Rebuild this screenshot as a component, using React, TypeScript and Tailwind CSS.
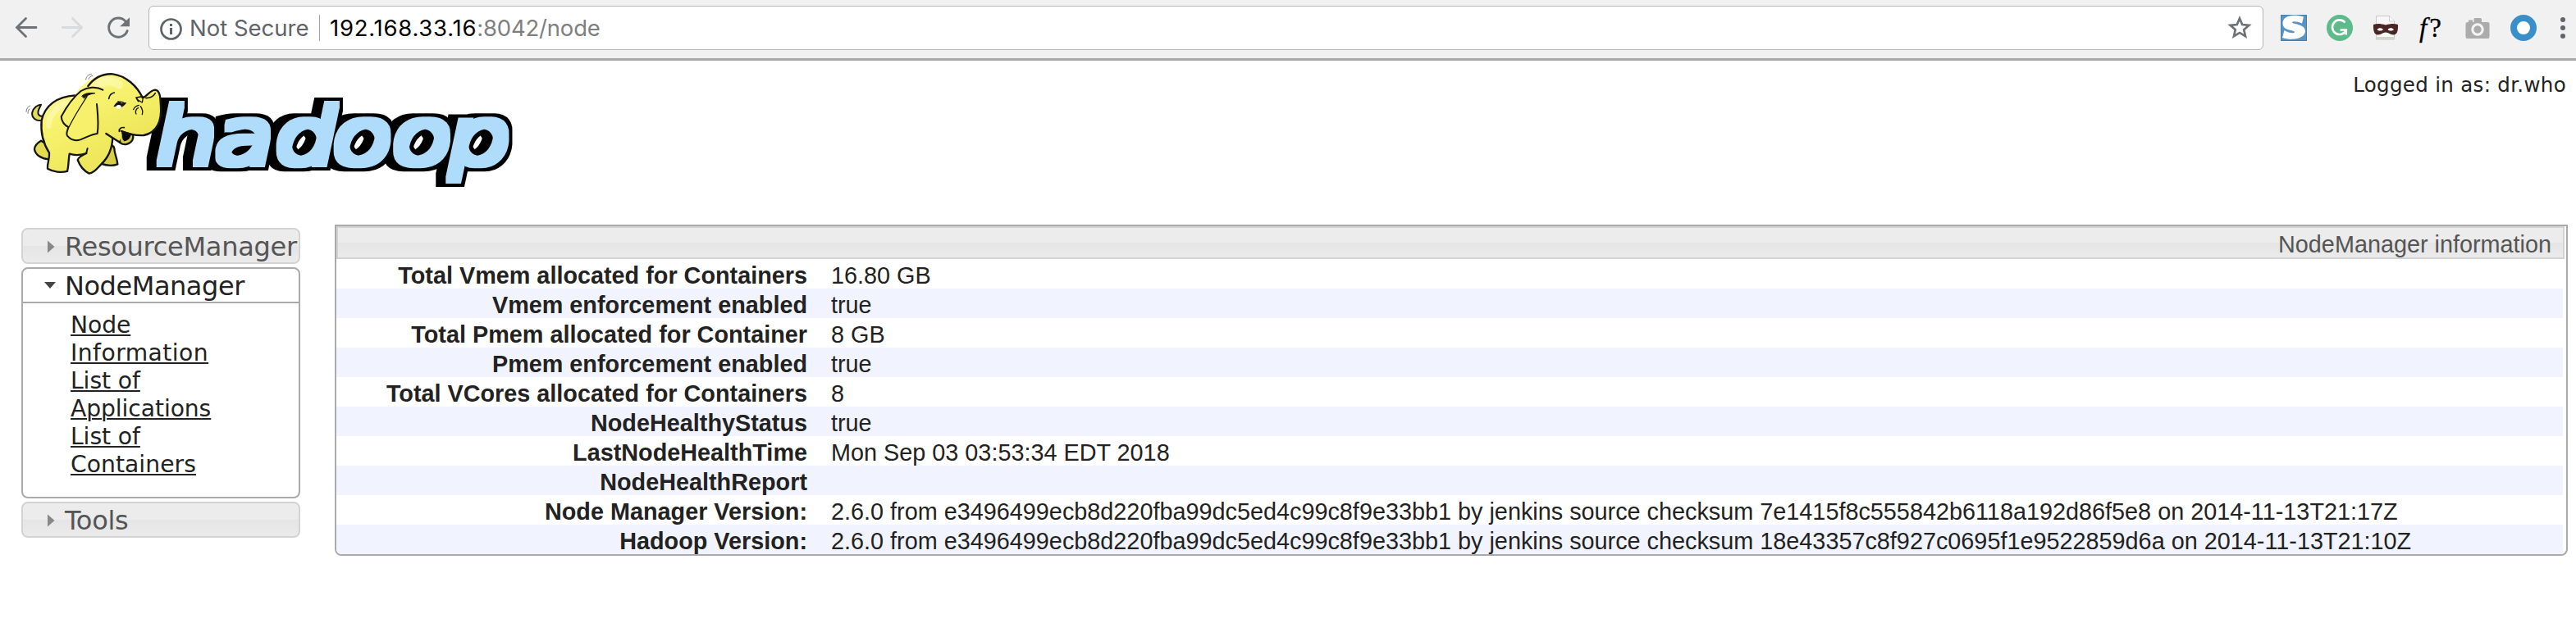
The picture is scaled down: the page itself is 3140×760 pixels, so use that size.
import React from "react";

const rows: [string, string][] = [
  ["Total Vmem allocated for Containers", "16.80 GB"],
  ["Vmem enforcement enabled", "true"],
  ["Total Pmem allocated for Container", "8 GB"],
  ["Pmem enforcement enabled", "true"],
  ["Total VCores allocated for Containers", "8"],
  ["NodeHealthyStatus", "true"],
  ["LastNodeHealthTime", "Mon Sep 03 03:53:34 EDT 2018"],
  ["NodeHealthReport", ""],
  [
    "Node Manager Version:",
    "2.6.0 from e3496499ecb8d220fba99dc5ed4c99c8f9e33bb1 by jenkins source checksum 7e1415f8c555842b6118a192d86f5e8 on 2014-11-13T21:17Z",
  ],
  [
    "Hadoop Version:",
    "2.6.0 from e3496499ecb8d220fba99dc5ed4c99c8f9e33bb1 by jenkins source checksum 18e43357c8f927c0695f1e9522859d6a on 2014-11-13T21:10Z",
  ],
];

function Toolbar() {
  return (
    <header className="flex h-[74px] items-start border-b-[3px] border-[#a8a8a8] bg-[#f1f1f1] pt-[7px]">
      <div className="flex h-[54px] w-[181px] shrink-0 items-center pl-[18px]">
        <svg width="28" height="28" viewBox="0 0 28 28" fill="none" stroke="#6e7175" strokeWidth="2.8" strokeLinecap="round">
          <path d="M26 13.5H3M13.5 2.5 2.5 13.5l11 11" />
        </svg>
        <svg className="ml-7" width="28" height="28" viewBox="0 0 28 28" fill="none" stroke="#d9dadb" strokeWidth="2.8" strokeLinecap="round">
          <path d="M2.5 13.5H25M14.5 2.5l11 11-11 11" />
        </svg>
        <svg className="ml-7" width="30" height="28" viewBox="0 0 30 28" fill="none">
          <path d="M25.2 17.5A11.6 11.6 0 1 1 22.8 5.8" stroke="#6e7175" strokeWidth="2.9" strokeLinecap="round" />
          <path d="M28 1.2v11H16.2z" fill="#6e7175" />
        </svg>
      </div>
      <div className="flex h-[54px] w-[2578px] shrink-0 items-center rounded-[6px] border border-[#b6b6b6] bg-white pl-[13px] font-['Inter','Roboto',sans-serif] text-[27.5px]">
        <svg width="27" height="27" viewBox="0 0 27 27" fill="none" className="relative top-px">
          <circle cx="13.5" cy="13.5" r="12" stroke="#606368" strokeWidth="2.7" />
          <path d="M12 12h3v8h-3zM12 7h3v3h-3z" fill="#606368" />
        </svg>
        <span className="ml-[9px] w-[158px] leading-[54px] whitespace-nowrap text-[#606368]">Not Secure</span>
        <span className="h-8 w-px bg-[#a5a5a5]" />
        <span className="ml-[12px] grow leading-[54px] tracking-[-0.2px] whitespace-nowrap text-[#7f7f7f]">
          <span className="tracking-[0.75px] text-black">192.168.33.16</span>:8042/node
        </span>
        <svg className="mr-[12px]" width="32" height="32" viewBox="0 0 30 30" fill="none" stroke="#6e7175" strokeWidth="2.5">
          <path d="m15 4.2 3 7.1 7.700.7-5.800 5.100 1.700 7.500-6.600-4-6.600 4 1.700-7.500L4.300 12l7.700-.7z" />
        </svg>
      </div>
      <div className="flex h-[54px] items-center gap-6 pl-[21px]">
        <svg width="32" height="32" viewBox="0 0 32 32">
          <rect width="32" height="32" fill="#5b93c3" />
          <rect x=".5" y=".5" width="31" height="31" fill="none" stroke="#447fb2" />
          <path d="M28 2.500 26 10.500C20 8 14 7.500 14 9.500c0 2 16 1.500 16 10.500C30 29 14 32 2 28l2.500-9c6 4 12.500 4 12.500 2C17 18.500 2.500 20 2.500 10.500 2.500 0 17-1 28 2.500z" fill="#fff" />
        </svg>
        <svg width="32" height="32" viewBox="0 0 32 32" fill="none">
          <circle cx="16" cy="16" r="16" fill="#5dbb8a" />
          <path d="M22.500 9.500A8.800 8.800 0 1 0 23.500 19.500M16.500 18.500h7.300v6" stroke="#fff" strokeWidth="2.600" />
        </svg>
        <svg width="32" height="32" viewBox="0 0 32 32">
          <path d="M4.500 1.500h16l6 6.500v22h-22z" fill="#f7f7f7" stroke="#c9c9c9" />
          <path d="M20.500 1.500V8h6" fill="#fff" stroke="#c9c9c9" />
          <path d="M4.500 27h22v3.500h-22z" fill="#d4d6c8" />
          <path d="M1 12c5-1.500 9-1 15 .5 6-1.500 10-2 15-.5.3 7-1 12.500-5.500 12.500-4 0-5.500-3-9.500-3s-5 3-9.500 3C2 24.500.7 19 1 12z" fill="#4b2523" />
          <path d="M5.500 18c2-2.300 5.500-2.300 7.500 0-2 2-5.500 2-7.500 0zm13 0c2-2.300 5.500-2.300 7.500 0-2 2-5.500 2-7.500 0z" fill="#fff" />
        </svg>
        <span className="w-8 text-center font-['Liberation_Serif',serif] text-[33px] leading-[46px] tracking-[3px] whitespace-nowrap text-black [-webkit-text-stroke:0.3px_black]">
          <i>f</i>?
        </span>
        <svg width="32" height="32" viewBox="0 0 32 32">
          <path d="M4 9h1V6.500h5V9h1.500V5.500q0-1.500 1.500-1.500h6.500Q21 4 21 5.500V9h7.500q2 0 2 2v16q0 2-2 2h-25q-2 0-2-2V11q0-2 2.500-2z" fill="#acacac" />
          <circle cx="16" cy="18" r="6.200" fill="none" stroke="#f5f5f5" strokeWidth="3" />
        </svg>
        <svg width="32" height="32" viewBox="0 0 32 32" fill="none">
          <circle cx="16" cy="16" r="12" fill="#fff" stroke="#3a8fc9" strokeWidth="8" />
        </svg>
        <svg className="ml-[5px]" width="6" height="28" viewBox="0 0 6 28" fill="#606368">
          <circle cx="3" cy="4" r="3" />
          <circle cx="3" cy="14" r="3" />
          <circle cx="3" cy="24" r="3" />
        </svg>
      </div>
    </header>
  );
}

function HadoopLogo() {
  return (
    <svg width="620" height="165" viewBox="0 0 620 165" className="block">
      <defs>
        <filter id="extrude" filterUnits="userSpaceOnUse" x="130" y="0" width="490" height="165" colorInterpolationFilters="sRGB">
          <feMorphology in="SourceAlpha" operator="dilate" radius="4 4" result="body" />
          <feFlood floodColor="#b0dcfb" result="blue" />
          <feComposite in="blue" in2="body" operator="in" result="face" />
          <feMorphology in="body" operator="dilate" radius="8 4" result="fat" />
          <feOffset in="fat" dx="-4" dy="0" result="shadow" />
          <feMerge>
            <feMergeNode in="shadow" />
            <feMergeNode in="face" />
          </feMerge>
        </filter>
        <linearGradient id="hide" x1="0" y1="0" x2="0.5" y2="1">
          <stop offset="0" stopColor="#fdfbb0" />
          <stop offset="0.35" stopColor="#f8f36f" />
          <stop offset="1" stopColor="#eee75c" />
        </linearGradient>
      </defs>
      <g filter="url(#extrude)">
        <g transform="translate(0 125) skewX(-12) scale(1.25 1)">
          <text x="131 189 247.500 303.500 361.500 416.500" y="0" fontFamily="DejaVu Sans" fontSize="96">
            hadoop
          </text>
        </g>
      </g>
      <g transform="scale(0.33333)" stroke="#15150c" strokeWidth="7" strokeLinejoin="round" strokeLinecap="round">
        <path d="M96 214C72 222 54 204 58 186c4-16 20-28 32-28-4 12-14 20-10 34 4 8 12 10 18 6" fill="#e4dd58" strokeWidth="6" />
        <path d="M90 290c-14 8-24 18-24 32 4 20 24 34 52 36l20-40z" fill="#e4dc50" />
        <path d="M330 300c10 2 26 6 28 18 0 20 10 34 12 58-20 8-44 4-62-2z" fill="#d8cf45" />
        <path
          d="M214 124C150 128 104 160 92 216c-4 44 6 84 28 118 2 22-8 38-6 58 20 12 50 16 72 10 6-24 4-44 8-64 18 6 44 4 62-2-14 6-28 12-32 24 8 22 22 40 42 50 20-2 30-20 44-34 26-24 40-52 42-98z"
          fill="url(#hide)"
        />
        <path d="M384 262c-8 12-10 24-4 36 14 10 34 6 44-10 4-8 4-14 2-24z" fill="#d5cb45" />
        <path d="M388 258c-4 14-2 26 6 34 14-2 24-12 26-28z" fill="#080804" stroke="none" />
        <path
          d="M214 124C244 72 294 44 352 46c48 6 88 40 108 84 16-4 30-26 48-26 20 4 20 34 20 60 4 54-14 96-62 106-24 4-52-6-82-12 4 16-4 26-8 34-16-8-34-20-52-32-40 0-80-20-110-50z"
          fill="url(#hide)"
          stroke="none"
        />
        <path d="M262 90C286 58 316 44 352 46c48 6 90 44 110 88 14-6 28-30 46-30 20 4 18 34 20 60 4 54-14 96-62 106-26 2-54-4-80-14M328 264c18 12 34 22 50 32" fill="none" />
        <path d="M300 90c14-22 50-22 76-4" fill="none" stroke="#fdfcc4" strokeWidth="30" opacity="0.500" />
        <path d="M118 236c2-36 24-66 60-82" fill="none" stroke="#fdfcc4" strokeWidth="20" opacity="0.500" />
        <path
          d="M316 104c-24-14-56-10-80 4-30 24-54 60-72 94 2 20 14 32 26 38-2 12-10 22-4 32 12 14 30 20 48 14 22-8 42-20 62-22 6-36 2-66-2-108"
          fill="#f6f06b"
          stroke="none"
        />
        <path
          d="M316 104c-24-14-56-10-80 4-30 24-54 60-72 94 2 20 14 32 26 38-2 12-10 22-4 32 12 14 30 20 48 14 22-8 42-20 62-22 6-36 2-66-2-108"
          fill="none"
          strokeWidth="6"
        />
        <path d="M192 240c24-48 46-80 66-112" fill="none" strokeWidth="4" />
        <path d="M240 126c10-10 26-12 48-10-16 2-32 8-40 18z" fill="#15150c" strokeWidth="3" />
        <path d="M338 136c2-12 10-20 20-22M438 132l8 14M462 128l-22 4M474 134c16 0 28-8 34-18" fill="none" strokeWidth="5" />
        <path d="M358 164c10-16 20-22 40-10-8 10-20 14-30 10M372 146l12 10 16-4" fill="#15150c" strokeWidth="4" />
        <ellipse cx="374" cy="166" rx="9" ry="7" fill="#fff" stroke="none" />
        <path d="M428 176c4-10 10-14 20-16M438 192c-6-10 2-20 8-22M460 194c4-12-2-24-6-30M442 140l18 10 2-10" fill="none" strokeWidth="4" />
        <path d="M376 256c-2-10 8-16 18-14M382 254l44 14" fill="none" strokeWidth="5" />
        <path d="M256 334l4-16" fill="none" strokeWidth="6" />
        <path d="M254 66c2-12 8-18 20-20M264 64c2-6 6-10 14-12M36 184c0-12 6-18 14-22M42 190c0-8 2-12 6-16" fill="none" stroke="#777" strokeWidth="3" />
      </g>
    </svg>
  );
}

function ClosedSection({ title }: { title: string }) {
  return (
    <div className="flex h-11 items-center overflow-hidden rounded-[8px] border-2 border-[#d3d3d3] bg-[linear-gradient(#ececec_0%,#ececec_50%,#e5e5e5_51%,#ebebeb_100%)] pl-[30px]">
      <svg width="9" height="16" viewBox="0 0 9 16" className="relative top-px">
        <path d="M0 .5v15l8.500-7.500z" fill="#888" />
      </svg>
      <span className="ml-3 pt-[2px] text-[32px] leading-[40px] tracking-[-0.28px] whitespace-nowrap text-[#555]">{title}</span>
    </div>
  );
}

function Sidebar() {
  return (
    <nav className="flex w-[340px] shrink-0 flex-col gap-1 pt-1 font-['DejaVu_Sans',Verdana,sans-serif]">
      <ClosedSection title="ResourceManager" />
      <div className="h-[282px] rounded-[8px] border-2 border-[#aaa] bg-white">
        <div className="flex h-[42px] items-center border-b-2 border-[#aaa] pl-[26px]">
          <svg width="14" height="8" viewBox="0 0 14 8">
            <path d="M0 0h14L7 8z" fill="#444" />
          </svg>
          <span className="ml-[11px] pt-[2px] text-[32px] leading-[40px] tracking-[-0.450px] text-[#222]">NodeManager</span>
        </div>
        <ul className="pt-[10px] pl-[58px] text-[28.200px] leading-[34px] tracking-[-0.08px] text-[#222] underline decoration-2 underline-offset-[2px]">
          <li>
            Node
            <br />
            <span className="tracking-[0.450px]">Information</span>
          </li>
          <li>
            List of
            <br />
            Applications
          </li>
          <li>
            List of
            <br />
            <span className="tracking-[0.050px]">Containers</span>
          </li>
        </ul>
      </div>
      <ClosedSection title="Tools" />
    </nav>
  );
}

function InfoPanel() {
  return (
    <section className="ml-[42px] h-[404px] w-[2722px] shrink-0 overflow-hidden rounded-b-[8px] border-2 border-[#aaa] bg-white font-['Liberation_Sans',Arial,sans-serif] text-[28.800px] text-[#222]">
      <div className="mr-[2px] h-10 border-2 border-[#d3d3d3] bg-[linear-gradient(#ececec_0%,#ececec_50%,#e5e5e5_51%,#ebebeb_100%)] pr-[14px] text-right leading-[41px] text-[#555]">
        NodeManager information
      </div>
      <div className="mr-1">
        {rows.map(([label, value], i) => (
          <div key={label} className={i % 2 ? "flex h-9 bg-[#f1f4fe] leading-[41px]" : "flex h-9 leading-[41px]"}>
            <span className="w-[574px] shrink-0 text-right font-bold whitespace-nowrap">{label}</span>
            <span className="ml-[29px] tracking-[0.005px] whitespace-nowrap">{value}</span>
          </div>
        ))}
      </div>
    </section>
  );
}

export default function App() {
  return (
    <div className="h-[760px] w-[3140px] overflow-hidden bg-white">
      <Toolbar />
      <div className="flex h-[200px] items-start justify-between pr-[12px] pl-5">
        <div className="pt-px">
          <HadoopLogo />
        </div>
        <div className="pt-[15px] font-['DejaVu_Sans',Verdana,sans-serif] text-[24.500px] leading-[30px] tracking-[0.320px] text-[#222]">
          Logged in as: dr.who
        </div>
      </div>
      <main className="flex items-start pl-[26px]">
        <Sidebar />
        <InfoPanel />
      </main>
    </div>
  );
}
